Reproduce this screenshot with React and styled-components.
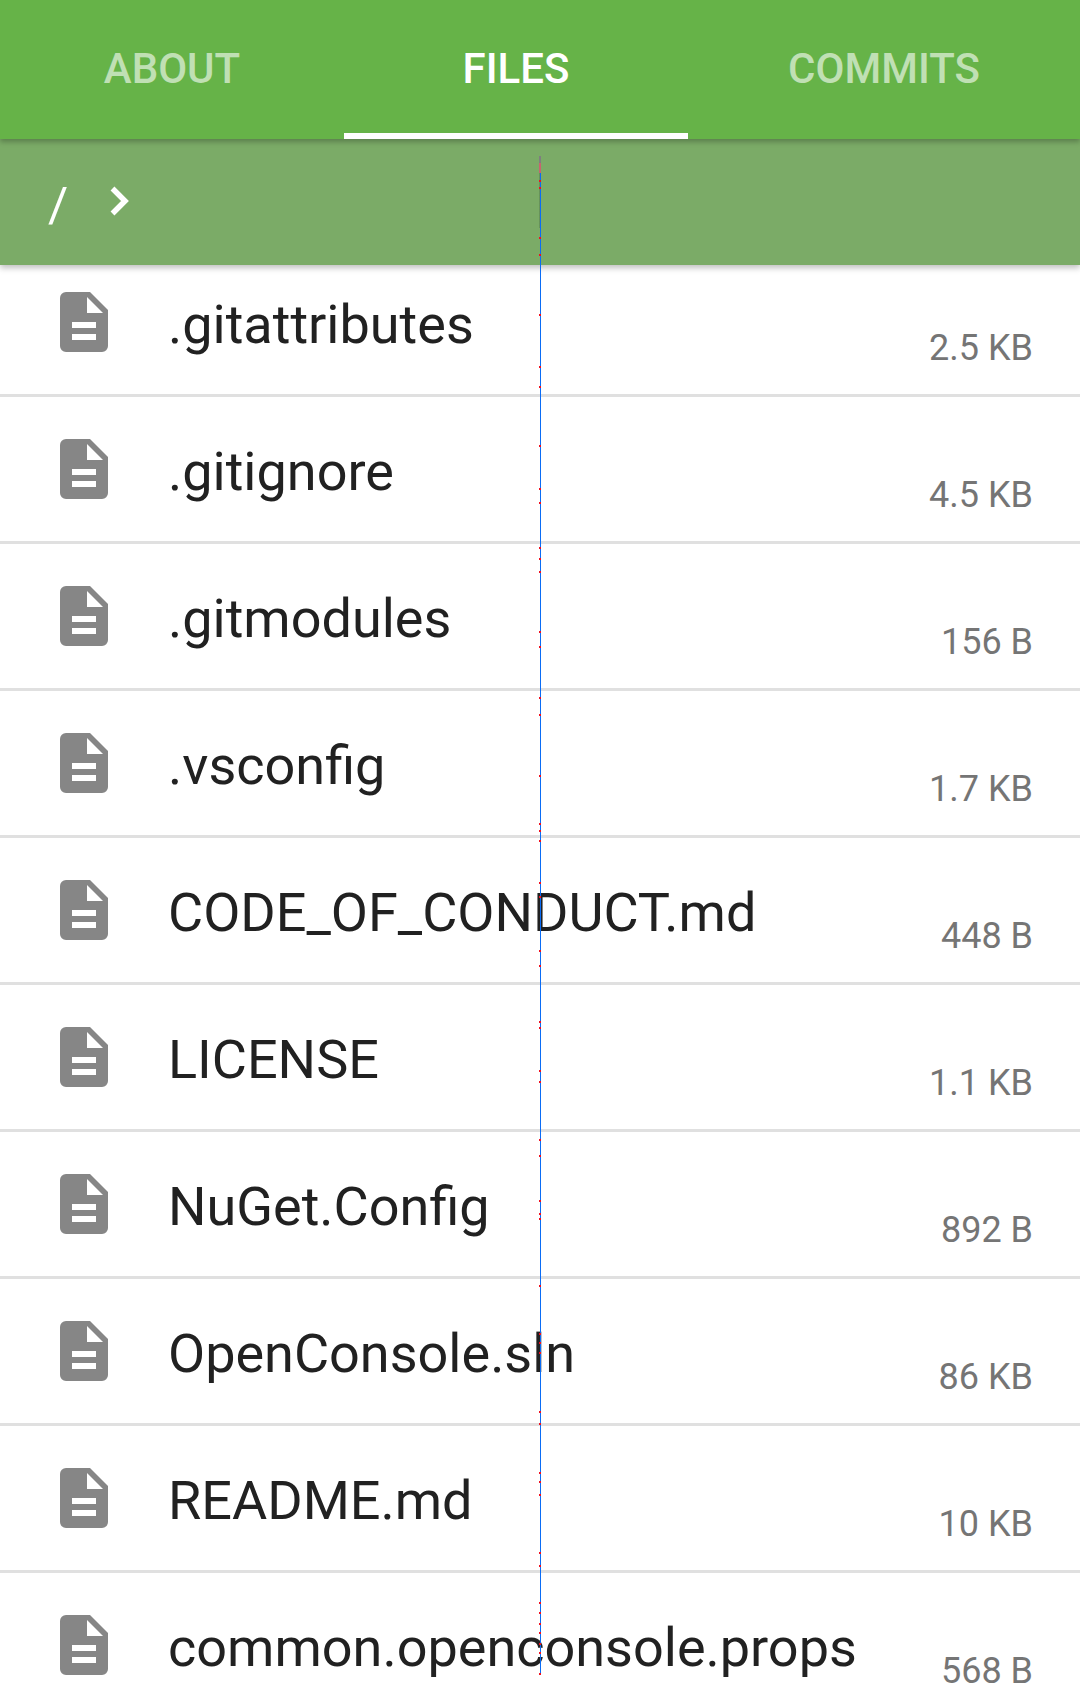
import React from "react";
import styled, { createGlobalStyle } from "styled-components";

const files = [
  { name: ".gitattributes", size: "2.5 KB" },
  { name: ".gitignore", size: "4.5 KB" },
  { name: ".gitmodules", size: "156 B" },
  { name: ".vsconfig", size: "1.7 KB" },
  { name: "CODE_OF_CONDUCT.md", size: "448 B" },
  { name: "LICENSE", size: "1.1 KB" },
  { name: "NuGet.Config", size: "892 B" },
  { name: "OpenConsole.sln", size: "86 KB" },
  { name: "README.md", size: "10 KB" },
  { name: "common.openconsole.props", size: "568 B" },
];

// red ticks along the debug line, page y
const ticks = [
  180, 187, 237, 254, 314, 366, 386, 445, 488, 502, 547, 558, 571, 631, 646, 697, 714, 775, 823,
  830, 840, 882, 896, 950, 965, 1021, 1027, 1070, 1081, 1139, 1155, 1200, 1213, 1218, 1285, 1333,
  1342, 1352, 1411, 1423, 1472, 1481, 1494, 1552, 1565, 1602, 1612, 1623, 1632, 1643, 1652, 1673,
];

const GlobalStyle = createGlobalStyle`
  html, body {
    margin: 0;
    padding: 0;
    background: #fff;
    overflow: hidden;
  }
`;

const Page = styled.div`
  position: relative;
  width: 1080px;
  height: 1699px;
  overflow: hidden;
  font-family: Roboto, "Liberation Sans", sans-serif;
`;

const Tabs = styled.div`
  position: relative;
  z-index: 2;
  display: grid;
  grid-template-columns: 344px 344px 392px;
  height: 139px;
  background: #66b348;
  box-shadow: 0 3px 5px rgba(0, 0, 0, 0.25);
`;

const Tab = styled.div`
  display: flex;
  align-items: center;
  justify-content: center;
  box-sizing: border-box;
  height: 139px;
  padding-top: 4px;
  font-size: 42px;
  font-weight: 500;
  color: ${(p) => (p.$active ? "#fff" : "rgba(255, 255, 255, 0.6)")};
  border-bottom: 6px solid ${(p) => (p.$active ? "#fff" : "transparent")};
`;

const PathBar = styled.div`
  position: relative;
  z-index: 1;
  display: flex;
  align-items: center;
  gap: 42px;
  height: 126px;
  padding-left: 48px;
  background: #7bab67;
  box-shadow: 0 3px 6px rgba(0, 0, 0, 0.25);
  color: #fff;
`;

const Slash = styled.span`
  margin-top: 4px;
  font-size: 49px;
  font-weight: 400;
  line-height: 1;
`;

const ChevronBox = styled.span`
  display: flex;
  margin-top: -3px;
`;

const FileList = styled.div`
  margin-top: -15px;
`;

const FileRow = styled.div`
  display: flex;
  box-sizing: border-box;
  height: 147px;
  padding: 0 47px 0 60px;
  border-bottom: 3px solid #e0e0e0;
`;

const FileIconBox = styled.div`
  flex: none;
  width: 48px;
  margin-top: 42px;
  margin-right: 60px;
`;

const FileName = styled.div`
  flex: 1;
  margin-top: 43px;
  font-size: 54px;
  line-height: 64px;
  color: #212121;
  white-space: nowrap;
`;

const FileSize = styled.div`
  align-self: flex-start;
  margin-top: 76px;
  font-size: 36px;
  line-height: 44px;
  color: #757575;
`;

const Marker = styled.div`
  position: absolute;
  z-index: 3;
  left: 539px;
  top: 156px;
  width: 2px;
  height: 1517px;
  background: linear-gradient(
    #7f7f7f 7px,
    #c8646e 7px 17px,
    rgba(90, 130, 80, 0.6) 17px 72px,
    transparent 72px
  );

  &::after {
    content: "";
    position: absolute;
    left: 1px;
    top: 17px;
    bottom: 0;
    width: 1px;
    background: #0a6cf5;
  }
`;

const Tick = styled.div`
  position: absolute;
  z-index: 1;
  left: 0;
  width: 2px;
  height: 2px;
  background: #f01020;
`;

const FileIcon = () => (
  <svg width="48" height="60" viewBox="0 0 48 60" style={{ display: "block" }}>
    <path
      fill="#868686"
      fillRule="evenodd"
      d="M6 0H30L48 18V54a6 6 0 0 1-6 6H6a6 6 0 0 1-6-6V6a6 6 0 0 1 6-6ZM27 5V21H43ZM12 30v6H36V30ZM12 42v6H36V42Z"
    />
  </svg>
);

const Chevron = () => (
  <svg width="20" height="30" viewBox="0 0 20 30" style={{ display: "block" }}>
    <path d="M2.5 2.5L15 15L2.5 27.5" fill="none" stroke="#fff" strokeWidth="5.5" />
  </svg>
);

export default function App() {
  return (
    <Page>
      <GlobalStyle />
      <Tabs>
        <Tab>ABOUT</Tab>
        <Tab $active>FILES</Tab>
        <Tab>COMMITS</Tab>
      </Tabs>
      <PathBar>
        <Slash>/</Slash>
        <ChevronBox>
          <Chevron />
        </ChevronBox>
      </PathBar>
      <FileList>
        {files.map((f) => (
          <FileRow key={f.name}>
            <FileIconBox>
              <FileIcon />
            </FileIconBox>
            <FileName>{f.name}</FileName>
            <FileSize>{f.size}</FileSize>
          </FileRow>
        ))}
      </FileList>
      <Marker>
        {ticks.map((y) => (
          <Tick key={y} style={{ top: y - 156 }} />
        ))}
      </Marker>
    </Page>
  );
}
